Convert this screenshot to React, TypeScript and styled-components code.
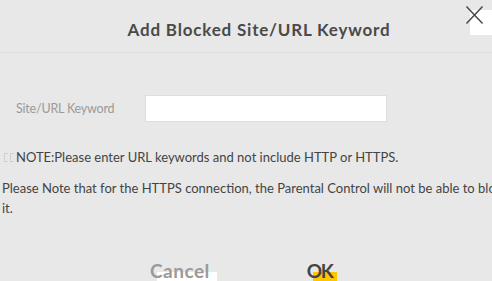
import React from 'react';
import styled, { createGlobalStyle } from 'styled-components';

const GlobalStyle = createGlobalStyle`
  html, body {
    margin: 0;
    padding: 0;
    background: #e8e8e8;
    overflow: hidden;
  }
  body {
    font-family: 'Lato', 'Liberation Sans', sans-serif;
  }
`;

const Dialog = styled.div`
  position: relative;
  width: 492px;
  height: 281px;
  overflow: hidden;
  background: #e8e8e8;
`;

const Header = styled.div`
  height: 53px;
  display: flex;
  align-items: center;
  justify-content: center;
  padding-left: 26px;
  padding-top: 6px;
  box-sizing: border-box;
  border-bottom: 1px solid #dddddd;
`;

const Title = styled.h2`
  margin: 0;
  font-size: 17px;
  font-weight: 700;
  color: #4a4a4a;
  letter-spacing: 0.8px;
`;

const Close = styled.button`
  position: absolute;
  top: 5px;
  left: 465px;
  width: 19px;
  height: 20px;
  padding: 0;
  border: 0;
  background: transparent;
  z-index: 2;
`;

const CornerTab = styled.div`
  position: absolute;
  top: 10px;
  left: 470px;
  width: 22px;
  height: 25px;
  background: #ffffff;
`;

const Body = styled.div`
  padding: 42px 0 0 0;
`;

const FormRow = styled.div`
  display: flex;
  align-items: center;
  height: 27px;
`;

const Label = styled.label`
  width: 145px;
  padding-left: 16px;
  box-sizing: border-box;
  font-size: 12.5px;
  letter-spacing: -0.2px;
  color: #9a9a9a;
`;

const Input = styled.input`
  width: 242px;
  height: 27px;
  box-sizing: border-box;
  border: 1px solid #dedede;
  background: #ffffff;
  outline: none;
`;

const Note = styled.div`
  margin-top: 25px;
  padding-left: 4px;
  display: flex;
  align-items: center;
  gap: 2px;
  font-size: 13px;
  color: #444444;
  line-height: 20px;
`;

const Glyph = styled.span`
  display: inline-block;
  width: 3px;
  height: 7px;
  border: 1px solid #d0d0d0;
  border-right-width: 0;
`;

const Paragraph = styled.p`
  margin: 11px 0 0 0;
  padding-left: 2px;
  width: 520px;
  font-size: 13px;
  line-height: 20px;
  color: #444444;
`;

const Actions = styled.div`
  margin-top: 43px;
  display: flex;
  padding-left: 150px;
  gap: 97px;
`;

const ActionButton = styled.button<{ $primary?: boolean }>`
  position: relative;
  z-index: 0;
  padding: 0;
  border: 0;
  background: transparent;
  font-family: inherit;
  font-size: 19px;
  line-height: 19px;
  font-weight: 700;
  letter-spacing: ${(p) => (p.$primary ? '-1.5px' : '0.5px')};
  color: ${(p) => (p.$primary ? '#444444' : '#9a9a9a')};

  &::before {
    content: '';
    position: absolute;
    top: 11px;
    left: ${(p) => (p.$primary ? '6px' : '7px')};
    width: ${(p) => (p.$primary ? '24px' : '60px')};
    height: 30px;
    background: ${(p) => (p.$primary ? '#ffc600' : '#ffffff')};
    z-index: -1;
  }
`;

export default function App() {
  return (
    <>
      <GlobalStyle />
      <Dialog>
        <CornerTab />
        <Close aria-label="close">
          <svg width="19" height="20" viewBox="0 0 19 20">
            <path d="M1.5 1.5 L17.5 18.5 M17.5 1.5 L1.5 18.5" stroke="#444" strokeWidth="1.4" fill="none" />
          </svg>
        </Close>
        <Header>
          <Title>Add Blocked Site/URL Keyword</Title>
        </Header>
        <Body>
          <FormRow>
            <Label>Site/URL Keyword</Label>
            <Input type="text" />
          </FormRow>
          <Note>
            <Glyph />
            <Glyph />
            <span>NOTE:Please enter URL keywords and not include HTTP or HTTPS.</span>
          </Note>
          <Paragraph>
            Please Note that for the HTTPS connection, the Parental Control will not be able to block it.
          </Paragraph>
          <Actions>
            <ActionButton>Cancel</ActionButton>
            <ActionButton $primary>OK</ActionButton>
          </Actions>
        </Body>
      </Dialog>
    </>
  );
}
